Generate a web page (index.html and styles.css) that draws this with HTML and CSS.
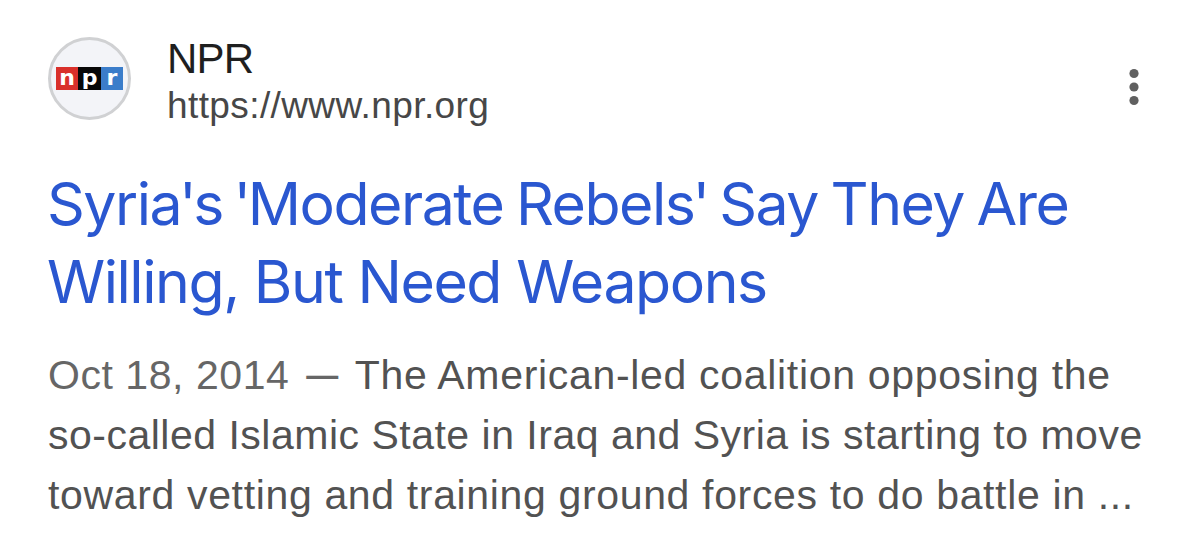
FILE: index.html
```html
<!DOCTYPE html>
<html lang="en">

<head>
    <meta charset="utf-8">
    <title>Search result</title>
    <link rel="stylesheet" href="styles.css">
</head>

<body>
    <div class="result">
        <div class="source">
            <div class="favicon">
                <div class="logo">
                    <span class="red">n</span>
                    <span class="black">p</span>
                    <span class="blue">r</span>
                </div>
            </div>
            <div class="site">
                <div class="name">NPR</div>
                <div class="url">https://www.npr.org</div>
            </div>
            <svg class="menu" width="10" height="38" viewBox="0 0 10 38">
                <circle cx="5" cy="5.5" r="4.6" />
                <circle cx="5" cy="19" r="4.6" />
                <circle cx="5" cy="32.5" r="4.6" />
            </svg>
        </div>

        <h1 class="title">
            <span class="title-1">Syria<span class="quote">'</span>s <span class="quote">'</span>Moderate Rebels<span class="quote">'</span> Say They Are</span><br>
            <span class="title-2">Willing, But Need Weapons</span>
        </h1>

        <p class="snippet">
            <span class="line-1"><span class="date">Oct 18, 2014 <span class="dash">—</span> </span>The American-led coalition opposing the</span><br>
            <span class="line-2">so-called Islamic State in Iraq and Syria is starting to move</span><br>
            <span class="line-3">toward vetting and training ground forces to do battle in ...</span>
        </p>
    </div>
</body>

</html>
```
FILE: styles.css
```css
body {
    background-color: #ffffff;
    font-family: "Liberation Sans", Arial, sans-serif;
    margin: 0;
}

.result {
    padding: 36px 48px 0;
}

.source {
    display: flex;
    align-items: flex-start;
    height: 129px;
}

.favicon {
    display: flex;
    align-items: center;
    justify-content: center;
    box-sizing: border-box;
    width: 83px;
    height: 83px;
    margin-top: 1px;
    border: 3px solid #d0d1d3;
    border-radius: 50%;
    background-color: #f3f4f8;
}

.logo {
    display: flex;
}

.logo span {
    width: 22.5px;
    height: 23px;
    color: #ffffff;
    font-family: "DejaVu Sans", sans-serif;
    font-size: 22px;
    font-weight: bold;
    line-height: 21px;
    text-align: center;
}

.logo .red {
    background-color: #d9302b;
}

.logo .black {
    background-color: #080808;
}

.logo .blue {
    background-color: #3b7dca;
}

.site {
    margin-left: 36px;
}

.name {
    color: #1f1f1f;
    font-size: 42px;
    letter-spacing: -0.8px;
    line-height: 45px;
}

.url {
    color: #474747;
    font-size: 37px;
    letter-spacing: 0.4px;
    line-height: 49px;
}

.menu {
    margin: 32px 13px 0 auto;
    fill: #606060;
}

.title {
    margin: 0 0 0 -1px;
    color: #2a57d0;
    font-family: Inter, sans-serif;
    font-size: 59px;
    font-weight: normal;
    line-height: 78px;
    white-space: nowrap;
}

.title-1 {
    letter-spacing: -1.5px;
    word-spacing: -2.5px;
}

.title-2 {
    letter-spacing: -1.45px;
}

.quote {
    margin: 0 -2px;
}

.snippet {
    margin: 24px 0 0;
    color: #525252;
    font-size: 41px;
    line-height: 60px;
    white-space: nowrap;
}

.line-1 {
    letter-spacing: 0.68px;
}

.line-2 {
    letter-spacing: 0.5px;
}

.line-3 {
    letter-spacing: 0.65px;
}

.date {
    color: #666666;
    letter-spacing: 0.55px;
}

.dash {
    margin: 0 4px 0 5px;
    font-size: 32px;
    font-weight: bold;
    line-height: 0;
    vertical-align: 3px;
}
```
